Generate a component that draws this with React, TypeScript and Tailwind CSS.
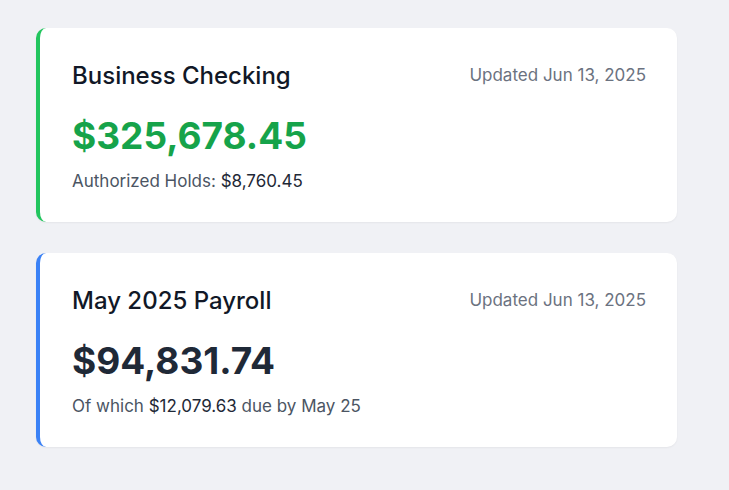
export default function App() {
    const cards = [
        {
            title: "Business Checking",
            updated: "Updated Jun 13, 2025",
            amount: "$325,678.45",
            amountColor: "text-[#16a34a]",
            border: "border-[#22c55e]",
            note: (
                <>
                    Authorized Holds: <span className="text-[#1f2937]">$8,760.45</span>
                </>
            ),
        },
        {
            title: "May 2025 Payroll",
            updated: "Updated Jun 13, 2025",
            amount: "$94,831.74",
            amountColor: "text-[#1f2937]",
            border: "border-[#3b82f6]",
            note: (
                <>
                    Of which <span className="text-[#1f2937]">$12,079.63</span> due by May 25
                </>
            ),
        },
    ]
    return (
        <div
            className="min-h-[490px] bg-[#f0f1f5] pl-[36px] pt-[28px]"
            style={{ fontFamily: "Inter, 'Noto Sans', sans-serif" }}
        >
            <div className="flex w-[641px] flex-col gap-[31px]">
                {cards.map((c) => (
                    <div
                        key={c.title}
                        className={`h-[194px] rounded-[10px] border-l-4 ${c.border} bg-white pl-[32px] pr-[31px] pt-[32px] shadow-[0_1px_2px_rgba(0,0,0,0.05)]`}
                    >
                        <div className="flex items-center justify-between">
                            <h2 className="text-[24px] leading-[32px] font-medium text-[#111827]">{c.title}</h2>
                            <span className="text-[17px] text-[#6b7280]">{c.updated}</span>
                        </div>
                        <div className={`mt-[24px] text-[37px] leading-[40px] font-bold ${c.amountColor}`}>
                            {c.amount}
                        </div>
                        <div className="mt-[15px] text-[17px] leading-[20px] text-[#4b5563]">{c.note}</div>
                    </div>
                ))}
            </div>
        </div>
    )
}
